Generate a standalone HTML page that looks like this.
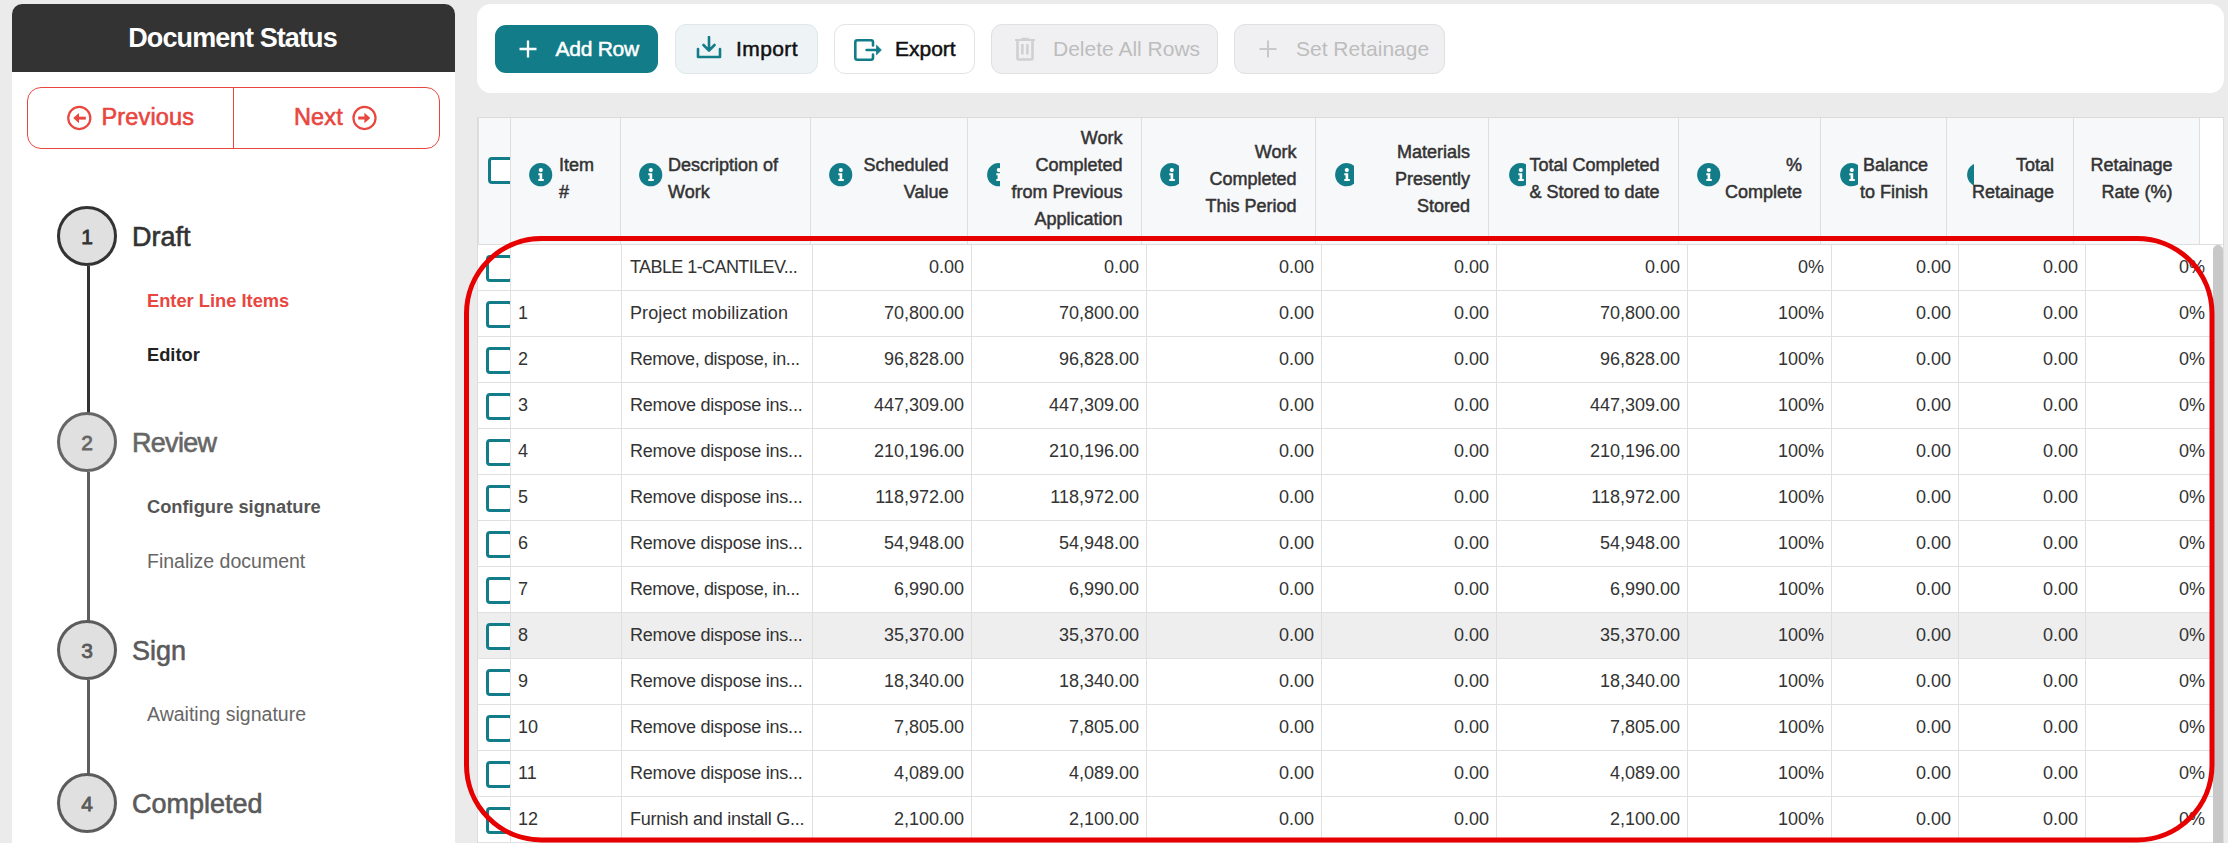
<!DOCTYPE html><html><head><meta charset="utf-8"><style>
*{box-sizing:border-box;margin:0;padding:0}
html,body{width:2228px;height:843px;overflow:hidden;background:#ebebeb;font-family:"Liberation Sans", sans-serif;color:#333}
.abs{position:absolute}
.med{-webkit-text-stroke:0.5px currentColor}
.med2{-webkit-text-stroke:0.6px currentColor}
#side{position:absolute;left:12px;top:4px;width:443px;height:900px;background:#fff;border-radius:10px 10px 0 0;overflow:hidden}
#sidehd{position:absolute;left:0;top:0;width:443px;height:68px;background:#333;color:#fff;font-size:27px;font-weight:700;text-align:center;line-height:68px;letter-spacing:-0.9px;padding-right:2px}
#navbtn{position:absolute;left:27px;top:87px;width:413px;height:62px;border:1px solid #e8463f;border-radius:14px}
#navbtn .div{position:absolute;left:204.5px;top:0;width:1px;height:60px;background:#e8463f}
.navtxt{position:absolute;color:#e8463f;font-size:23.5px;white-space:nowrap;letter-spacing:0.15px}
.circ{position:absolute;width:60px;height:60px;border-radius:50%;background:#e0e0e0;border:3px solid #333;text-align:center;font-size:21px;line-height:56px;-webkit-text-stroke:0.8px currentColor}
.vline{position:absolute;width:3px}
.steplbl{position:absolute;font-size:27px;white-space:nowrap}
.sub{position:absolute;left:147px;font-size:19.5px;white-space:nowrap}
#tool{position:absolute;left:477px;top:4px;width:1747px;height:89px;background:#fff;border-radius:14px}
.btn{position:absolute;top:24px;height:50px;border-radius:11px;border:1px solid #e2e5e7;font-size:21px;white-space:nowrap}
.btn .t{position:absolute;top:0;line-height:48px}
#tbl{position:absolute;left:477px;top:117px;width:1747px;height:760px;background:#fff;border:1px solid #dcdcdc;overflow:hidden}
.hd{position:absolute;top:118px;height:126px;background:#f7f8fa}
.hb{position:absolute;width:1px;background:#dedede}
.htxt{position:absolute;font-size:18px;line-height:27px;white-space:nowrap;color:#333}
.row{position:absolute;left:478px;width:1735px;height:45px}
.cell{position:absolute;top:0;height:45px;line-height:45px;font-size:18px;white-space:nowrap;color:#333}
.cb{position:absolute;width:27px;height:27px;border:3px solid #137c89;border-radius:4px;background:#fff}
.rb{position:absolute;left:478px;width:1735px;height:1px;background:#e0e0e0}
</style></head><body><div id="side"><div id="sidehd">Document Status</div></div>
<div id="navbtn"><div class="div"></div></div>
<svg class="abs" style="left:66px;top:105px" width="27" height="26" viewBox="0 0 27 26"><circle cx="13.3" cy="13" r="11.05" fill="none" stroke="#e8463f" stroke-width="2.2"/><path d="M7.2 13.1L13 7.9V18.3z" fill="#e8463f"/><rect x="12.5" y="11.7" width="7.3" height="2.9" fill="#e8463f"/></svg><svg class="abs" style="left:351px;top:105px" width="27" height="26" viewBox="0 0 27 26"><circle cx="13.5" cy="13" r="11.05" fill="none" stroke="#e8463f" stroke-width="2.2"/><path d="M19.3 13.05L13.4 7.8V18.3z" fill="#e8463f"/><rect x="7.2" y="11.5" width="6.7" height="3" fill="#e8463f"/></svg>
<div class="navtxt med2" style="left:101.5px;top:102px;line-height:30px">Previous</div>
<div class="navtxt med2" style="left:294px;top:102px;line-height:30px">Next</div>
<div class="vline" style="left:87px;top:266px;height:148px;background:#333"></div>
<div class="vline" style="left:87px;top:472px;height:149px;background:#5f5f5f"></div>
<div class="vline" style="left:87px;top:680px;height:94px;background:#5f5f5f"></div>
<div class="circ" style="left:57px;top:206px;border-color:#333;color:#333">1</div>
<div class="steplbl med2" style="left:132px;top:219.5px;line-height:34px;color:#333;letter-spacing:0">Draft</div>
<div class="circ" style="left:57px;top:412px;border-color:#666;color:#666">2</div>
<div class="steplbl med2" style="left:132px;top:425.5px;line-height:34px;color:#666;letter-spacing:-0.7px">Review</div>
<div class="circ" style="left:57px;top:620px;border-color:#5c5c5c;color:#5a5a5a">3</div>
<div class="steplbl med2" style="left:132px;top:633.5px;line-height:34px;color:#5a5a5a;letter-spacing:0">Sign</div>
<div class="circ" style="left:57px;top:773px;border-color:#5c5c5c;color:#5a5a5a">4</div>
<div class="steplbl med2" style="left:132px;top:786.5px;line-height:34px;color:#5a5a5a;letter-spacing:0">Completed</div>
<div class="sub" style="top:289px;line-height:24px;color:#e8463f;font-weight:700;font-size:18.3px;">Enter Line Items</div>
<div class="sub" style="top:343px;line-height:24px;color:#222;font-weight:700;font-size:18.3px;">Editor</div>
<div class="sub" style="top:495px;line-height:24px;color:#555;font-weight:700;font-size:18.3px;">Configure signature</div>
<div class="sub" style="top:549px;line-height:24px;color:#666;">Finalize document</div>
<div class="sub" style="top:702px;line-height:24px;color:#666;">Awaiting signature</div>
<div id="tool"></div>
<div class="btn" style="left:495px;top:25px;width:163px;height:48px;background:#137c89;border:none"><div class="t med" style="left:60.5px;color:#fff;line-height:48px;letter-spacing:-0.25px">Add Row</div></div>
<svg class="abs" style="left:519px;top:40px" width="18" height="18" viewBox="0 0 18 18"><path d="M9 0.5v17M0.5 9h17" stroke="#fff" stroke-width="2.3"/></svg>
<div class="btn" style="left:675px;width:143px;background:#eef4f6;border-color:#dfe7ea"><div class="t med" style="left:60px;color:#111;letter-spacing:0.4px">Import</div></div>
<svg class="abs" style="left:696px;top:36px" width="26" height="23" viewBox="0 0 26 23"><path d="M13 1v13M7.5 9l5.5 5.5L18.5 9" fill="none" stroke="#137c89" stroke-width="2.6" stroke-linecap="round" stroke-linejoin="round"/><path d="M2 13v8h22v-8" fill="none" stroke="#137c89" stroke-width="2.6" stroke-linecap="round" stroke-linejoin="round"/></svg>
<div class="btn" style="left:834px;width:141px;background:#fff;border-color:#e3e3e3"><div class="t med" style="left:60px;color:#111">Export</div></div>
<svg class="abs" style="left:853px;top:38.7px" width="30" height="22" viewBox="0 0 30 22"><path d="M20 6.5V3.3Q20 1.3 18 1.3H4.3Q2.3 1.3 2.3 3.3V18.7Q2.3 20.7 4.3 20.7H18Q20 20.7 20 18.7V15.5" fill="none" stroke="#137c89" stroke-width="2.6" stroke-linecap="round"/><path d="M13.6 11h11" stroke="#137c89" stroke-width="2.6" stroke-linecap="round"/><path d="M23.5 6.2L28.4 11l-4.9 4.8z" fill="#137c89" stroke="#137c89" stroke-width="0.8" stroke-linejoin="round"/></svg>
<div class="btn" style="left:991px;width:227px;background:#f0f0f2;border-color:#e0e0e2"><div class="t" style="left:61px;color:#bdbdbd">Delete All Rows</div></div>
<svg class="abs" style="left:1014px;top:36.5px" width="22" height="24" viewBox="0 0 22 24"><path d="M1 3h20" stroke="#d0d0d0" stroke-width="2"/><path d="M7.4 1.6h7.5" stroke="#d0d0d0" stroke-width="1.6"/><path d="M3.5 4v17.5q0 1 1 1h13q1 0 1-1V4" fill="none" stroke="#d0d0d0" stroke-width="2.6"/><path d="M8.4 7v10.6M13.4 7v10.6" stroke="#d0d0d0" stroke-width="2.5"/></svg>
<div class="btn" style="left:1234px;width:211px;background:#f0f0f2;border-color:#e0e0e2"><div class="t" style="left:61px;color:#bdbdbd">Set Retainage</div></div>
<svg class="abs" style="left:1259px;top:40px" width="18" height="18" viewBox="0 0 18 18"><path d="M9 0.5v17M0.5 9h17" stroke="#c8c8c8" stroke-width="2"/></svg>
<div id="tbl"></div>
<div class="hd" style="left:479px;width:1720px"></div>
<div class="hb" style="left:478px;top:118px;height:726px"></div>
<div class="abs" style="left:2199px;top:118px;width:24px;height:126px;background:#fff"></div>
<div class="hb" style="left:510px;top:118px;height:126px"></div>
<div class="hb" style="left:620px;top:118px;height:126px"></div>
<div class="hb" style="left:810px;top:118px;height:126px"></div>
<div class="hb" style="left:967px;top:118px;height:126px"></div>
<div class="hb" style="left:1141px;top:118px;height:126px"></div>
<div class="hb" style="left:1315px;top:118px;height:126px"></div>
<div class="hb" style="left:1488px;top:118px;height:126px"></div>
<div class="hb" style="left:1678px;top:118px;height:126px"></div>
<div class="hb" style="left:1820px;top:118px;height:126px"></div>
<div class="hb" style="left:1946px;top:118px;height:126px"></div>
<div class="hb" style="left:2073px;top:118px;height:126px"></div>
<div class="hb" style="left:2199px;top:118px;height:126px"></div>
<div class="abs" style="left:478px;top:244px;width:1745px;height:1px;background:#dedede"></div>
<div class="abs" style="left:478px;top:118px;width:32px;height:126px;overflow:hidden"><div class="cb" style="left:10px;top:39px;width:27px;height:27px"></div></div>
<div class="abs" style="left:529.3px;top:162.70000000000002px;width:24px;height:24px;overflow:hidden"><svg width="24" height="24" viewBox="0 0 24 24"><circle cx="11.7" cy="11.7" r="11.6" fill="#137c89"/><circle cx="11.8" cy="7.1" r="2.1" fill="#fff"/><path d="M9.3 10.3h3.9v5.6h1.6v2h-5.5v-2h1.3v-3.6H9.3z" fill="#fff"/></svg></div>
<div class="htxt med" style="left:559px;top:152px;text-align:left">Item<br>#</div>
<div class="abs" style="left:639.3px;top:162.70000000000002px;width:24px;height:24px;overflow:hidden"><svg width="24" height="24" viewBox="0 0 24 24"><circle cx="11.7" cy="11.7" r="11.6" fill="#137c89"/><circle cx="11.8" cy="7.1" r="2.1" fill="#fff"/><path d="M9.3 10.3h3.9v5.6h1.6v2h-5.5v-2h1.3v-3.6H9.3z" fill="#fff"/></svg></div>
<div class="htxt med" style="left:668px;top:152px;text-align:left">Description of<br>Work</div>
<div class="abs" style="left:829.3px;top:162.70000000000002px;width:24px;height:24px;overflow:hidden"><svg width="24" height="24" viewBox="0 0 24 24"><circle cx="11.7" cy="11.7" r="11.6" fill="#137c89"/><circle cx="11.8" cy="7.1" r="2.1" fill="#fff"/><path d="M9.3 10.3h3.9v5.6h1.6v2h-5.5v-2h1.3v-3.6H9.3z" fill="#fff"/></svg></div>
<div class="htxt med" style="right:1279.5px;top:152px;text-align:right">Scheduled<br>Value</div>
<div class="abs" style="left:987.3px;top:162.70000000000002px;width:13px;height:24px;overflow:hidden"><svg width="24" height="24" viewBox="0 0 24 24"><circle cx="11.7" cy="11.7" r="11.6" fill="#137c89"/><circle cx="11.8" cy="7.1" r="2.1" fill="#fff"/><path d="M9.3 10.3h3.9v5.6h1.6v2h-5.5v-2h1.3v-3.6H9.3z" fill="#fff"/></svg></div>
<div class="htxt med" style="right:1105.5px;top:125px;text-align:right">Work<br>Completed<br>from Previous<br>Application</div>
<div class="abs" style="left:1160.3px;top:162.70000000000002px;width:19px;height:24px;overflow:hidden"><svg width="24" height="24" viewBox="0 0 24 24"><circle cx="11.7" cy="11.7" r="11.6" fill="#137c89"/><circle cx="11.8" cy="7.1" r="2.1" fill="#fff"/><path d="M9.3 10.3h3.9v5.6h1.6v2h-5.5v-2h1.3v-3.6H9.3z" fill="#fff"/></svg></div>
<div class="htxt med" style="right:931.5px;top:139px;text-align:right">Work<br>Completed<br>This Period</div>
<div class="abs" style="left:1334.8px;top:162.70000000000002px;width:19.5px;height:24px;overflow:hidden"><svg width="24" height="24" viewBox="0 0 24 24"><circle cx="11.7" cy="11.7" r="11.6" fill="#137c89"/><circle cx="11.8" cy="7.1" r="2.1" fill="#fff"/><path d="M9.3 10.3h3.9v5.6h1.6v2h-5.5v-2h1.3v-3.6H9.3z" fill="#fff"/></svg></div>
<div class="htxt med" style="right:758px;top:139px;text-align:right">Materials<br>Presently<br>Stored</div>
<div class="abs" style="left:1508.8px;top:162.70000000000002px;width:17.5px;height:24px;overflow:hidden"><svg width="24" height="24" viewBox="0 0 24 24"><circle cx="11.7" cy="11.7" r="11.6" fill="#137c89"/><circle cx="11.8" cy="7.1" r="2.1" fill="#fff"/><path d="M9.3 10.3h3.9v5.6h1.6v2h-5.5v-2h1.3v-3.6H9.3z" fill="#fff"/></svg></div>
<div class="htxt med" style="right:568.5px;top:152px;text-align:right">Total Completed<br>&amp; Stored to date</div>
<div class="abs" style="left:1697.3px;top:162.70000000000002px;width:24px;height:24px;overflow:hidden"><svg width="24" height="24" viewBox="0 0 24 24"><circle cx="11.7" cy="11.7" r="11.6" fill="#137c89"/><circle cx="11.8" cy="7.1" r="2.1" fill="#fff"/><path d="M9.3 10.3h3.9v5.6h1.6v2h-5.5v-2h1.3v-3.6H9.3z" fill="#fff"/></svg></div>
<div class="htxt med" style="right:426px;top:152px;text-align:right">%<br>Complete</div>
<div class="abs" style="left:1839.8px;top:162.70000000000002px;width:18.5px;height:24px;overflow:hidden"><svg width="24" height="24" viewBox="0 0 24 24"><circle cx="11.7" cy="11.7" r="11.6" fill="#137c89"/><circle cx="11.8" cy="7.1" r="2.1" fill="#fff"/><path d="M9.3 10.3h3.9v5.6h1.6v2h-5.5v-2h1.3v-3.6H9.3z" fill="#fff"/></svg></div>
<div class="htxt med" style="right:300px;top:152px;text-align:right">Balance<br>to Finish</div>
<div class="abs" style="left:1966.8px;top:162.70000000000002px;width:7.5px;height:24px;overflow:hidden"><svg width="24" height="24" viewBox="0 0 24 24"><circle cx="11.7" cy="11.7" r="11.6" fill="#137c89"/><circle cx="11.8" cy="7.1" r="2.1" fill="#fff"/><path d="M9.3 10.3h3.9v5.6h1.6v2h-5.5v-2h1.3v-3.6H9.3z" fill="#fff"/></svg></div>
<div class="htxt med" style="right:174px;top:152px;text-align:right">Total<br>Retainage</div>
<div class="htxt med" style="right:55.5px;top:152px;text-align:right">Retainage<br>Rate (%)</div>
<div class="row" style="top:245px;background:#fff"></div>
<div class="abs" style="left:478px;top:245px;width:32px;height:45px;overflow:hidden"><div class="cb" style="left:8px;top:10px"></div></div>
<div class="cell" style="left:518px;top:245px"></div>
<div class="cell" style="left:630px;top:245px;letter-spacing:-0.58px">TABLE 1-CANTILEV...</div>
<div class="cell" style="right:1264px;top:245px;text-align:right">0.00</div>
<div class="cell" style="right:1089px;top:245px;text-align:right">0.00</div>
<div class="cell" style="right:914px;top:245px;text-align:right">0.00</div>
<div class="cell" style="right:739px;top:245px;text-align:right">0.00</div>
<div class="cell" style="right:548px;top:245px;text-align:right">0.00</div>
<div class="cell" style="right:404px;top:245px;text-align:right">0%</div>
<div class="cell" style="right:277px;top:245px;text-align:right">0.00</div>
<div class="cell" style="right:150px;top:245px;text-align:right">0.00</div>
<div class="cell" style="right:23px;top:245px;text-align:right">0%</div>
<div class="rb" style="top:290px"></div>
<div class="row" style="top:291px;background:#fff"></div>
<div class="abs" style="left:478px;top:291px;width:32px;height:45px;overflow:hidden"><div class="cb" style="left:8px;top:10px"></div></div>
<div class="cell" style="left:518px;top:291px">1</div>
<div class="cell" style="left:630px;top:291px;letter-spacing:0.1px">Project mobilization</div>
<div class="cell" style="right:1264px;top:291px;text-align:right">70,800.00</div>
<div class="cell" style="right:1089px;top:291px;text-align:right">70,800.00</div>
<div class="cell" style="right:914px;top:291px;text-align:right">0.00</div>
<div class="cell" style="right:739px;top:291px;text-align:right">0.00</div>
<div class="cell" style="right:548px;top:291px;text-align:right">70,800.00</div>
<div class="cell" style="right:404px;top:291px;text-align:right">100%</div>
<div class="cell" style="right:277px;top:291px;text-align:right">0.00</div>
<div class="cell" style="right:150px;top:291px;text-align:right">0.00</div>
<div class="cell" style="right:23px;top:291px;text-align:right">0%</div>
<div class="rb" style="top:336px"></div>
<div class="row" style="top:337px;background:#fff"></div>
<div class="abs" style="left:478px;top:337px;width:32px;height:45px;overflow:hidden"><div class="cb" style="left:8px;top:10px"></div></div>
<div class="cell" style="left:518px;top:337px">2</div>
<div class="cell" style="left:630px;top:337px;letter-spacing:-0.38px">Remove, dispose, in...</div>
<div class="cell" style="right:1264px;top:337px;text-align:right">96,828.00</div>
<div class="cell" style="right:1089px;top:337px;text-align:right">96,828.00</div>
<div class="cell" style="right:914px;top:337px;text-align:right">0.00</div>
<div class="cell" style="right:739px;top:337px;text-align:right">0.00</div>
<div class="cell" style="right:548px;top:337px;text-align:right">96,828.00</div>
<div class="cell" style="right:404px;top:337px;text-align:right">100%</div>
<div class="cell" style="right:277px;top:337px;text-align:right">0.00</div>
<div class="cell" style="right:150px;top:337px;text-align:right">0.00</div>
<div class="cell" style="right:23px;top:337px;text-align:right">0%</div>
<div class="rb" style="top:382px"></div>
<div class="row" style="top:383px;background:#fff"></div>
<div class="abs" style="left:478px;top:383px;width:32px;height:45px;overflow:hidden"><div class="cb" style="left:8px;top:10px"></div></div>
<div class="cell" style="left:518px;top:383px">3</div>
<div class="cell" style="left:630px;top:383px;letter-spacing:-0.22px">Remove dispose ins...</div>
<div class="cell" style="right:1264px;top:383px;text-align:right">447,309.00</div>
<div class="cell" style="right:1089px;top:383px;text-align:right">447,309.00</div>
<div class="cell" style="right:914px;top:383px;text-align:right">0.00</div>
<div class="cell" style="right:739px;top:383px;text-align:right">0.00</div>
<div class="cell" style="right:548px;top:383px;text-align:right">447,309.00</div>
<div class="cell" style="right:404px;top:383px;text-align:right">100%</div>
<div class="cell" style="right:277px;top:383px;text-align:right">0.00</div>
<div class="cell" style="right:150px;top:383px;text-align:right">0.00</div>
<div class="cell" style="right:23px;top:383px;text-align:right">0%</div>
<div class="rb" style="top:428px"></div>
<div class="row" style="top:429px;background:#fff"></div>
<div class="abs" style="left:478px;top:429px;width:32px;height:45px;overflow:hidden"><div class="cb" style="left:8px;top:10px"></div></div>
<div class="cell" style="left:518px;top:429px">4</div>
<div class="cell" style="left:630px;top:429px;letter-spacing:-0.22px">Remove dispose ins...</div>
<div class="cell" style="right:1264px;top:429px;text-align:right">210,196.00</div>
<div class="cell" style="right:1089px;top:429px;text-align:right">210,196.00</div>
<div class="cell" style="right:914px;top:429px;text-align:right">0.00</div>
<div class="cell" style="right:739px;top:429px;text-align:right">0.00</div>
<div class="cell" style="right:548px;top:429px;text-align:right">210,196.00</div>
<div class="cell" style="right:404px;top:429px;text-align:right">100%</div>
<div class="cell" style="right:277px;top:429px;text-align:right">0.00</div>
<div class="cell" style="right:150px;top:429px;text-align:right">0.00</div>
<div class="cell" style="right:23px;top:429px;text-align:right">0%</div>
<div class="rb" style="top:474px"></div>
<div class="row" style="top:475px;background:#fff"></div>
<div class="abs" style="left:478px;top:475px;width:32px;height:45px;overflow:hidden"><div class="cb" style="left:8px;top:10px"></div></div>
<div class="cell" style="left:518px;top:475px">5</div>
<div class="cell" style="left:630px;top:475px;letter-spacing:-0.22px">Remove dispose ins...</div>
<div class="cell" style="right:1264px;top:475px;text-align:right">118,972.00</div>
<div class="cell" style="right:1089px;top:475px;text-align:right">118,972.00</div>
<div class="cell" style="right:914px;top:475px;text-align:right">0.00</div>
<div class="cell" style="right:739px;top:475px;text-align:right">0.00</div>
<div class="cell" style="right:548px;top:475px;text-align:right">118,972.00</div>
<div class="cell" style="right:404px;top:475px;text-align:right">100%</div>
<div class="cell" style="right:277px;top:475px;text-align:right">0.00</div>
<div class="cell" style="right:150px;top:475px;text-align:right">0.00</div>
<div class="cell" style="right:23px;top:475px;text-align:right">0%</div>
<div class="rb" style="top:520px"></div>
<div class="row" style="top:521px;background:#fff"></div>
<div class="abs" style="left:478px;top:521px;width:32px;height:45px;overflow:hidden"><div class="cb" style="left:8px;top:10px"></div></div>
<div class="cell" style="left:518px;top:521px">6</div>
<div class="cell" style="left:630px;top:521px;letter-spacing:-0.22px">Remove dispose ins...</div>
<div class="cell" style="right:1264px;top:521px;text-align:right">54,948.00</div>
<div class="cell" style="right:1089px;top:521px;text-align:right">54,948.00</div>
<div class="cell" style="right:914px;top:521px;text-align:right">0.00</div>
<div class="cell" style="right:739px;top:521px;text-align:right">0.00</div>
<div class="cell" style="right:548px;top:521px;text-align:right">54,948.00</div>
<div class="cell" style="right:404px;top:521px;text-align:right">100%</div>
<div class="cell" style="right:277px;top:521px;text-align:right">0.00</div>
<div class="cell" style="right:150px;top:521px;text-align:right">0.00</div>
<div class="cell" style="right:23px;top:521px;text-align:right">0%</div>
<div class="rb" style="top:566px"></div>
<div class="row" style="top:567px;background:#fff"></div>
<div class="abs" style="left:478px;top:567px;width:32px;height:45px;overflow:hidden"><div class="cb" style="left:8px;top:10px"></div></div>
<div class="cell" style="left:518px;top:567px">7</div>
<div class="cell" style="left:630px;top:567px;letter-spacing:-0.38px">Remove, dispose, in...</div>
<div class="cell" style="right:1264px;top:567px;text-align:right">6,990.00</div>
<div class="cell" style="right:1089px;top:567px;text-align:right">6,990.00</div>
<div class="cell" style="right:914px;top:567px;text-align:right">0.00</div>
<div class="cell" style="right:739px;top:567px;text-align:right">0.00</div>
<div class="cell" style="right:548px;top:567px;text-align:right">6,990.00</div>
<div class="cell" style="right:404px;top:567px;text-align:right">100%</div>
<div class="cell" style="right:277px;top:567px;text-align:right">0.00</div>
<div class="cell" style="right:150px;top:567px;text-align:right">0.00</div>
<div class="cell" style="right:23px;top:567px;text-align:right">0%</div>
<div class="rb" style="top:612px"></div>
<div class="row" style="top:613px;background:#eeeeee"></div>
<div class="abs" style="left:478px;top:613px;width:32px;height:45px;overflow:hidden"><div class="cb" style="left:8px;top:10px"></div></div>
<div class="cell" style="left:518px;top:613px">8</div>
<div class="cell" style="left:630px;top:613px;letter-spacing:-0.22px">Remove dispose ins...</div>
<div class="cell" style="right:1264px;top:613px;text-align:right">35,370.00</div>
<div class="cell" style="right:1089px;top:613px;text-align:right">35,370.00</div>
<div class="cell" style="right:914px;top:613px;text-align:right">0.00</div>
<div class="cell" style="right:739px;top:613px;text-align:right">0.00</div>
<div class="cell" style="right:548px;top:613px;text-align:right">35,370.00</div>
<div class="cell" style="right:404px;top:613px;text-align:right">100%</div>
<div class="cell" style="right:277px;top:613px;text-align:right">0.00</div>
<div class="cell" style="right:150px;top:613px;text-align:right">0.00</div>
<div class="cell" style="right:23px;top:613px;text-align:right">0%</div>
<div class="rb" style="top:658px"></div>
<div class="row" style="top:659px;background:#fff"></div>
<div class="abs" style="left:478px;top:659px;width:32px;height:45px;overflow:hidden"><div class="cb" style="left:8px;top:10px"></div></div>
<div class="cell" style="left:518px;top:659px">9</div>
<div class="cell" style="left:630px;top:659px;letter-spacing:-0.22px">Remove dispose ins...</div>
<div class="cell" style="right:1264px;top:659px;text-align:right">18,340.00</div>
<div class="cell" style="right:1089px;top:659px;text-align:right">18,340.00</div>
<div class="cell" style="right:914px;top:659px;text-align:right">0.00</div>
<div class="cell" style="right:739px;top:659px;text-align:right">0.00</div>
<div class="cell" style="right:548px;top:659px;text-align:right">18,340.00</div>
<div class="cell" style="right:404px;top:659px;text-align:right">100%</div>
<div class="cell" style="right:277px;top:659px;text-align:right">0.00</div>
<div class="cell" style="right:150px;top:659px;text-align:right">0.00</div>
<div class="cell" style="right:23px;top:659px;text-align:right">0%</div>
<div class="rb" style="top:704px"></div>
<div class="row" style="top:705px;background:#fff"></div>
<div class="abs" style="left:478px;top:705px;width:32px;height:45px;overflow:hidden"><div class="cb" style="left:8px;top:10px"></div></div>
<div class="cell" style="left:518px;top:705px">10</div>
<div class="cell" style="left:630px;top:705px;letter-spacing:-0.22px">Remove dispose ins...</div>
<div class="cell" style="right:1264px;top:705px;text-align:right">7,805.00</div>
<div class="cell" style="right:1089px;top:705px;text-align:right">7,805.00</div>
<div class="cell" style="right:914px;top:705px;text-align:right">0.00</div>
<div class="cell" style="right:739px;top:705px;text-align:right">0.00</div>
<div class="cell" style="right:548px;top:705px;text-align:right">7,805.00</div>
<div class="cell" style="right:404px;top:705px;text-align:right">100%</div>
<div class="cell" style="right:277px;top:705px;text-align:right">0.00</div>
<div class="cell" style="right:150px;top:705px;text-align:right">0.00</div>
<div class="cell" style="right:23px;top:705px;text-align:right">0%</div>
<div class="rb" style="top:750px"></div>
<div class="row" style="top:751px;background:#fff"></div>
<div class="abs" style="left:478px;top:751px;width:32px;height:45px;overflow:hidden"><div class="cb" style="left:8px;top:10px"></div></div>
<div class="cell" style="left:518px;top:751px">11</div>
<div class="cell" style="left:630px;top:751px;letter-spacing:-0.22px">Remove dispose ins...</div>
<div class="cell" style="right:1264px;top:751px;text-align:right">4,089.00</div>
<div class="cell" style="right:1089px;top:751px;text-align:right">4,089.00</div>
<div class="cell" style="right:914px;top:751px;text-align:right">0.00</div>
<div class="cell" style="right:739px;top:751px;text-align:right">0.00</div>
<div class="cell" style="right:548px;top:751px;text-align:right">4,089.00</div>
<div class="cell" style="right:404px;top:751px;text-align:right">100%</div>
<div class="cell" style="right:277px;top:751px;text-align:right">0.00</div>
<div class="cell" style="right:150px;top:751px;text-align:right">0.00</div>
<div class="cell" style="right:23px;top:751px;text-align:right">0%</div>
<div class="rb" style="top:796px"></div>
<div class="row" style="top:797px;background:#fff"></div>
<div class="abs" style="left:478px;top:797px;width:32px;height:45px;overflow:hidden"><div class="cb" style="left:8px;top:10px"></div></div>
<div class="cell" style="left:518px;top:797px">12</div>
<div class="cell" style="left:630px;top:797px;letter-spacing:-0.24px">Furnish and install G...</div>
<div class="cell" style="right:1264px;top:797px;text-align:right">2,100.00</div>
<div class="cell" style="right:1089px;top:797px;text-align:right">2,100.00</div>
<div class="cell" style="right:914px;top:797px;text-align:right">0.00</div>
<div class="cell" style="right:739px;top:797px;text-align:right">0.00</div>
<div class="cell" style="right:548px;top:797px;text-align:right">2,100.00</div>
<div class="cell" style="right:404px;top:797px;text-align:right">100%</div>
<div class="cell" style="right:277px;top:797px;text-align:right">0.00</div>
<div class="cell" style="right:150px;top:797px;text-align:right">0.00</div>
<div class="cell" style="right:23px;top:797px;text-align:right">0%</div>
<div class="rb" style="top:842px"></div>
<div class="abs" style="left:510px;top:245px;width:1px;height:600px;background:#e0e0e0"></div>
<div class="abs" style="left:621px;top:245px;width:1px;height:600px;background:#e0e0e0"></div>
<div class="abs" style="left:812px;top:245px;width:1px;height:600px;background:#e0e0e0"></div>
<div class="abs" style="left:971px;top:245px;width:1px;height:600px;background:#e0e0e0"></div>
<div class="abs" style="left:1146px;top:245px;width:1px;height:600px;background:#e0e0e0"></div>
<div class="abs" style="left:1321px;top:245px;width:1px;height:600px;background:#e0e0e0"></div>
<div class="abs" style="left:1496px;top:245px;width:1px;height:600px;background:#e0e0e0"></div>
<div class="abs" style="left:1687px;top:245px;width:1px;height:600px;background:#e0e0e0"></div>
<div class="abs" style="left:1831px;top:245px;width:1px;height:600px;background:#e0e0e0"></div>
<div class="abs" style="left:1958px;top:245px;width:1px;height:600px;background:#e0e0e0"></div>
<div class="abs" style="left:2085px;top:245px;width:1px;height:600px;background:#e0e0e0"></div>
<div class="abs" style="left:2213px;top:245px;width:10px;height:600px;background:#fff"></div>
<div class="abs" style="left:2213px;top:245px;width:9.5px;height:620px;background:#c8c8c8;border-radius:5px"></div>
<div class="abs" style="left:2223px;top:118px;width:1px;height:726px;background:#dcdcdc"></div>
<svg class="abs" style="left:0;top:0" width="2228" height="843"><rect x="466.5" y="238.5" width="1745.5" height="601.5" rx="75" ry="75" fill="none" stroke="#e60000" stroke-width="5"/></svg></body></html>
